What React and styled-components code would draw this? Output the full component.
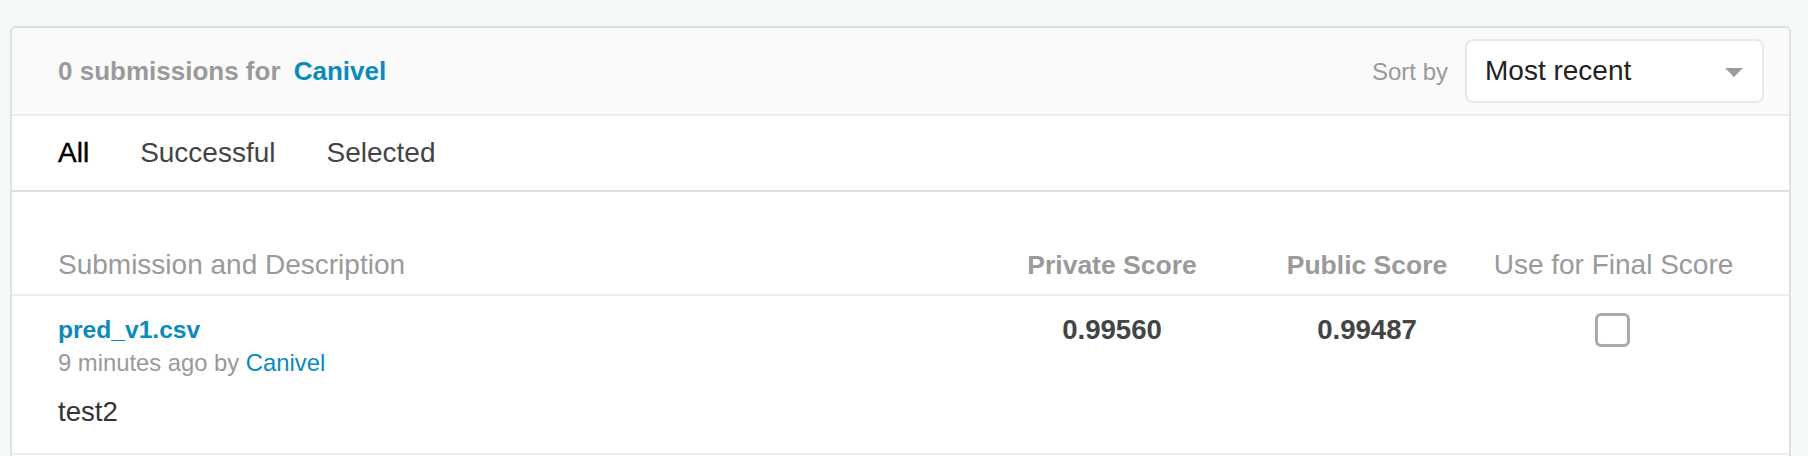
import React from 'react';
import styled, { createGlobalStyle } from 'styled-components';

const GlobalStyle = createGlobalStyle`
  html, body {
    margin: 0;
    padding: 0;
    background: #f5f8f9;
    font-family: "Liberation Sans", Arial, sans-serif;
  }
`;

const Page = styled.div`
  padding: 26px 17px 0 10px;
`;

const Card = styled.div`
  background: #fff;
  border: 2px solid #dfe0e1;
  border-radius: 6px;
  overflow: hidden;
`;

const Header = styled.div`
  display: flex;
  align-items: center;
  justify-content: space-between;
  padding: 11px 25px 11px 46px;
  background: #fafafa;
  border-bottom: 2px solid #ececec;
`;

const Title = styled.div`
  font-size: 26px;
  line-height: 30px;
  font-weight: 700;
  color: #9a9a9a;
`;

const Link = styled.a`
  color: #0a8abd;
  text-decoration: none;
  font-weight: ${p => (p.$bold ? 700 : 400)};
  margin-left: ${p => p.$gap || 0}px;
`;

const SortGroup = styled.div`
  display: flex;
  align-items: center;
  gap: 17px;
`;

const SortLabel = styled.span`
  font-size: 24px;
  line-height: 30px;
  color: #999;
  padding-top: 2px;
`;

const Select = styled.div`
  box-sizing: border-box;
  width: 299px;
  height: 64px;
  display: flex;
  align-items: center;
  justify-content: space-between;
  padding: 0 19px 0 18px;
  background: #fff;
  border: 2px solid #e9e9e9;
  border-radius: 8px;
  font-size: 28px;
  line-height: 32px;
  color: #222;
`;

const Caret = styled.span`
  width: 0;
  height: 0;
  border-left: 9px solid transparent;
  border-right: 9px solid transparent;
  border-top: 9px solid #9b9b9b;
  margin-top: 2px;
`;

const Tabs = styled.div`
  display: flex;
  align-items: center;
  gap: 51px;
  height: 74px;
  padding-left: 46px;
  border-bottom: 2px solid #dedede;
`;

const Tab = styled.span`
  font-size: 28px;
  line-height: 32px;
  color: ${p => (p.$active ? '#000' : '#444')};
  -webkit-text-stroke: ${p => (p.$active ? '0.4px #000' : '0')};
`;

const Table = styled.div`
  padding: 0 53px 0 46px;
`;

const Grid = styled.div`
  display: grid;
  grid-template-columns: 1fr 262px 248px 245px;
  align-items: start;
`;

const HeadRow = styled(Grid)`
  padding: 57px 0 13px;
  margin: 0 -53px 0 -46px;
  padding-left: 46px;
  padding-right: 53px;
  border-bottom: 2px solid #eeeeee;
`;

const HeadCell = styled.div`
  font-size: ${p => (p.$bold ? 26.5 : 28)}px;
  line-height: 32px;
  font-weight: ${p => (p.$bold ? 700 : 400)};
  color: #9a9a9a;
  text-align: ${p => (p.$center ? 'center' : 'left')};
  white-space: nowrap;
`;

const DataRow = styled(Grid)`
  padding: 19px 53px 25px 46px;
  margin: 0 -53px 0 -46px;
  border-bottom: 2px solid #eeeeee;
`;

const FileName = styled(Link)`
  display: block;
  font-size: 24.6px;
  line-height: 30px;
`;

const Meta = styled.div`
  margin-top: 3px;
  font-size: 23.8px;
  line-height: 30px;
  color: #999;
`;

const Description = styled.div`
  margin-top: 18px;
  font-size: 27.6px;
  line-height: 32px;
  color: #333;
`;

const Score = styled.div`
  font-size: 27.6px;
  line-height: 30px;
  font-weight: 700;
  color: #444;
  text-align: center;
`;

const CheckCell = styled.div`
  display: flex;
  justify-content: center;
  margin-top: -2px;
  padding-right: 3px;
`;

const Checkbox = styled.span`
  box-sizing: border-box;
  width: 35px;
  height: 34px;
  border: 3px solid #aaa;
  border-radius: 6px;
  background: #fff;
`;

const Filler = styled.div`
  height: 40px;
`;

export default function App() {
  return (
    <>
      <GlobalStyle />
      <Page>
        <Card>
          <Header>
            <Title>
              0 submissions for
              <Link $bold $gap={6}> Canivel</Link>
            </Title>
            <SortGroup>
              <SortLabel>Sort by</SortLabel>
              <Select>
                <span>Most recent</span>
                <Caret />
              </Select>
            </SortGroup>
          </Header>
          <Tabs>
            <Tab $active>All</Tab>
            <Tab>Successful</Tab>
            <Tab>Selected</Tab>
          </Tabs>
          <Table>
            <HeadRow>
              <HeadCell>Submission and Description</HeadCell>
              <HeadCell $bold $center>Private Score</HeadCell>
              <HeadCell $bold $center>Public Score</HeadCell>
              <HeadCell $center>Use for Final Score</HeadCell>
            </HeadRow>
            <DataRow>
              <div>
                <FileName $bold>pred_v1.csv</FileName>
                <Meta>
                  9 minutes ago by <Link>Canivel</Link>
                </Meta>
                <Description>test2</Description>
              </div>
              <Score>0.99560</Score>
              <Score>0.99487</Score>
              <CheckCell>
                <Checkbox />
              </CheckCell>
            </DataRow>
            <Filler />
          </Table>
        </Card>
      </Page>
    </>
  );
}
